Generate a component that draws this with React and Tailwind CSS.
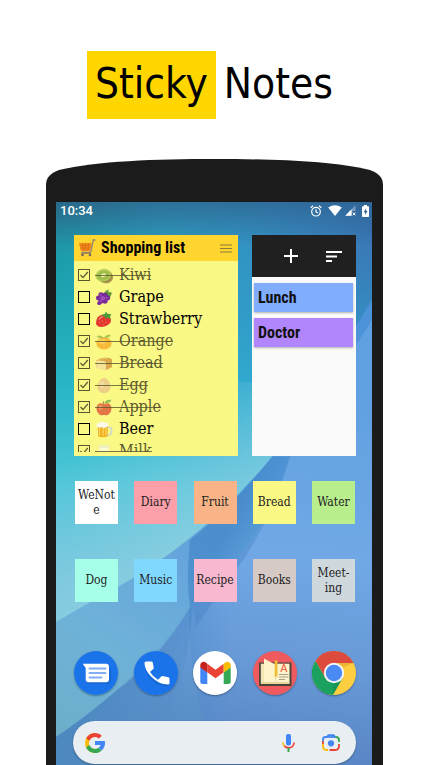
import React from "react";

const SLAB = "font-['Roboto_Slab','DejaVu_Serif_Condensed','DejaVu_Serif',serif]";
const CONDENSED = "font-['Roboto_Condensed','Liberation_Sans_Narrow','Roboto',sans-serif]";

function Wallpaper() {
  return (
    <svg className="absolute inset-0 h-full w-full" viewBox="0 0 316 563" preserveAspectRatio="none" aria-hidden="true">
      <defs>
        <linearGradient id="sky" x1="0" y1="0" x2="0" y2="1">
          <stop offset="0" stopColor="#2a8399" />
          <stop offset="0.1" stopColor="#1b9daa" />
          <stop offset="0.32" stopColor="#27b5c4" />
          <stop offset="0.5" stopColor="#4cc6d8" />
          <stop offset="0.66" stopColor="#66c2dc" />
          <stop offset="0.8" stopColor="#70c0dc" />
        </linearGradient>
        <radialGradient id="skyRight" gradientUnits="userSpaceOnUse" cx="330" cy="30" r="330">
          <stop offset="0" stopColor="#3a74b4" stopOpacity="1" />
          <stop offset="0.35" stopColor="#3a8cc8" stopOpacity="0.8" />
          <stop offset="0.7" stopColor="#3aa4dc" stopOpacity="0.45" />
          <stop offset="1" stopColor="#3aa4dc" stopOpacity="0" />
        </radialGradient>
        <linearGradient id="glow" gradientUnits="userSpaceOnUse" x1="60" y1="230" x2="130" y2="345">
          <stop offset="0" stopColor="#8fcfe2" stopOpacity="0" />
          <stop offset="1" stopColor="#8fcfe2" stopOpacity="0.8" />
        </linearGradient>
        <linearGradient id="shade" x1="0" y1="0" x2="0" y2="1">
          <stop offset="0" stopColor="#274f78" stopOpacity="0.5" />
          <stop offset="1" stopColor="#274f78" stopOpacity="0" />
        </linearGradient>
        <linearGradient id="band" gradientUnits="userSpaceOnUse" x1="316" y1="100" x2="0" y2="540">
          <stop offset="0" stopColor="#4c92d8" />
          <stop offset="0.4" stopColor="#5499d8" />
          <stop offset="0.6" stopColor="#66a6dc" />
          <stop offset="0.8" stopColor="#6fb2d8" />
          <stop offset="1" stopColor="#6caec8" />
        </linearGradient>
        <linearGradient id="front" gradientUnits="userSpaceOnUse" x1="270" y1="180" x2="230" y2="563">
          <stop offset="0" stopColor="#5fa0e0" />
          <stop offset="0.45" stopColor="#70a8e5" />
          <stop offset="0.75" stopColor="#6799d6" />
          <stop offset="1" stopColor="#5884c4" />
        </linearGradient>
        <linearGradient id="fold" gradientUnits="userSpaceOnUse" x1="95" y1="440" x2="150" y2="490">
          <stop offset="0" stopColor="#417fbe" stopOpacity="0.5" />
          <stop offset="1" stopColor="#4c8acb" stopOpacity="0" />
        </linearGradient>
        <linearGradient id="crease" gradientUnits="userSpaceOnUse" x1="132" y1="0" x2="175" y2="0">
          <stop offset="0" stopColor="#3f82c4" stopOpacity="0.3" />
          <stop offset="1" stopColor="#3f82c4" stopOpacity="0" />
        </linearGradient>
        <linearGradient id="slope" gradientUnits="userSpaceOnUse" x1="190" y1="285" x2="222" y2="300">
          <stop offset="0" stopColor="#3f82c4" stopOpacity="0.6" />
          <stop offset="1" stopColor="#3f82c4" stopOpacity="0.1" />
        </linearGradient>
        <linearGradient id="foldLow" gradientUnits="userSpaceOnUse" x1="0" y1="380" x2="0" y2="563">
          <stop offset="0" stopColor="#5c9bce" stopOpacity="0" />
          <stop offset="1" stopColor="#4a8fb8" stopOpacity="0.45" />
        </linearGradient>
      </defs>
      <rect width="316" height="563" fill="url(#sky)" />
      <rect width="316" height="430" fill="url(#skyRight)" />
      <path d="M0 180H270L216 255Q150 335 62 385Q34 400 0 420Z" fill="url(#glow)" />
      <path d="M316 98L299 126Q258 204 216 255Q150 335 62 385Q34 400 0 420V563H316Z" fill="url(#band)" />
      <path d="M216 255Q177 304 134 338Q130 380 134 404L177 361Q208 330 234 255Z" fill="url(#slope)" />
      <path d="M316 118Q258 210 234 255Q208 330 177 361L137 401Q118 432 101 451Q80 475 61 488Q30 515 0 535V563H316Z" fill="url(#front)" />
      <path d="M234 255Q208 330 177 361L137 401L140 425L172 378Q212 330 234 255Z" fill="#427fc0" fillOpacity="0.35" />
      <path d="M137 401Q118 432 101 451Q80 475 61 488Q30 515 0 535V563H70Q130 520 137 401Z" fill="url(#fold)" />
      <path d="M133 404Q132 470 152 530L190 530V372L177 361Z" fill="url(#crease)" />
      <path d="M0 535Q30 515 61 488Q101 451 135 404Q132 470 160 563H0Z" fill="url(#foldLow)" />
      <rect width="316" height="44" fill="url(#shade)" />
    </svg>
  );
}

function Cart() {
  return (
    <svg className="h-[18px] w-[18px]" viewBox="0 0 18 18" aria-hidden="true">
      <path d="M1 4h12.6l-1.7 8H3z" fill="#f28a1c" />
      <path d="M1.6 6.5h11.6M2.2 9h10.4M4.5 4.2l.7 7.6M7.4 4.2v7.6M10.5 4.2l-.5 7.6" stroke="#d96b10" strokeWidth=".7" />
      <path d="M17.4 1h-2.1l-2.6 12.3H3.4" fill="none" stroke="#8c8474" strokeWidth="1.3" />
      <path d="M3.2 14.5h9.6" stroke="#b5894a" strokeWidth="1" />
      <circle cx="4.5" cy="16" r="1.3" fill="#6f6a5d" />
      <circle cx="12" cy="16" r="1.3" fill="#6f6a5d" />
    </svg>
  );
}

const FOOD = {
  kiwi: (
    <>
      <ellipse cx="10" cy="10" rx="8.2" ry="7" transform="rotate(28 10 10)" fill="#7b5a2c" />
      <ellipse cx="8.4" cy="8.8" rx="7.8" ry="6.4" transform="rotate(-18 8.4 8.8)" fill="#86b13c" />
      <ellipse cx="8.4" cy="8.8" rx="5.8" ry="4.5" transform="rotate(-18 8.4 8.8)" fill="#6c9c28" />
      <ellipse cx="8.4" cy="8.8" rx="2.8" ry="1.9" transform="rotate(-18 8.4 8.8)" fill="#e4ecb0" />
    </>
  ),
  grape: (
    <>
      <path d="M9 4q3-4 5-3l-1 2 4 1-2 5q-4 0-6-5z" fill="#5f9c35" />
      <g fill="#7a2c9c">
        <circle cx="6" cy="6" r="2.6" /><circle cx="10" cy="6.5" r="2.6" /><circle cx="3.6" cy="9.6" r="2.6" />
        <circle cx="12.6" cy="9.6" r="2.6" /><circle cx="6" cy="13" r="2.6" /><circle cx="10" cy="13" r="2.6" /><circle cx="4.2" cy="15" r="2" />
      </g>
      <g fill="#9a4dbd"><circle cx="7.8" cy="9.8" r="2.3" /><circle cx="5.4" cy="6" r="1.1" /><circle cx="5.6" cy="12.6" r="1.1" /><circle cx="11.8" cy="9.2" r="1.1" /></g>
    </>
  ),
  strawberry: (
    <>
      <path d="M3 6Q8 2 13 5q4 3 2.600 7-3 4.500-9 5Q1.500 17 1 13 1 9 3 6z" fill="#e2382f" />
      <path d="M4 9q2-3 4-3" stroke="#f58a7a" strokeWidth="1.4" fill="none" />
      <path d="M6 4.500l4-1.500 1-2.500 1.500 2.500 4 .5-1.500 2 .5 3-3.500-1.500-1 1.500-1.500-2.500z" fill="#4e9a3a" />
      <g fill="#f7c07a"><circle cx="5" cy="12" r=".5" /><circle cx="8" cy="14" r=".5" /><circle cx="11" cy="12" r=".5" /><circle cx="7.500" cy="10.500" r=".5" /></g>
    </>
  ),
  orange: (
    <>
      <ellipse cx="9" cy="11" rx="7.6" ry="6.6" fill="#f49a14" />
      <ellipse cx="7" cy="9" rx="4" ry="2.600" fill="#fbb944" />
      <path d="M9 5Q5 1 1.500 3.500 4 7 9 5zM9 5q2-4 7-3-2 4-7 3z" fill="#86a83a" />
    </>
  ),
  bread: (
    <>
      <path d="M1 6q5-4 11-3 6 0 5 4v6l-6 3-10-3z" fill="#c9802e" />
      <path d="M1 7q1-2 5-1 5 0 5 2.500V16L1.500 14z" fill="#f4d9a0" />
      <path d="M2 6q5-3 10-2" stroke="#e2a557" strokeWidth="1.2" fill="none" />
    </>
  ),
  egg: (
    <>
      <path d="M9 1c4 0 6.500 6 6.500 10 0 3.500-3 6-6.500 6s-6.500-2.500-6.500-6C2.500 7 5 1 9 1z" fill="#e8b98a" />
      <ellipse cx="7" cy="8" rx="2.400" ry="3.600" fill="#f2cfa8" />
    </>
  ),
  apple: (
    <>
      <path d="M9 6C6 3 1.500 5 1.500 10c0 4 3 7.500 5.500 7.200 1.400-.3 2.600-.3 4 0 2.500.3 5.500-3.200 5.500-7.200C16.500 5 12 3 9 6z" fill="#d63324" />
      <ellipse cx="5.500" cy="9" rx="2" ry="2.600" fill="#ee6a52" />
      <path d="M9 6.500Q9 4 8 2.500" stroke="#6a4426" strokeWidth="1.1" fill="none" />
      <path d="M9.500 4Q11 0 16.500 .8 15 5 9.500 4z" fill="#5da03a" />
    </>
  ),
  beer: (
    <>
      <path d="M12 7h3q1.500 0 1.500 1.500V12q0 2-2 2.500L12 15" fill="none" stroke="#cdd5d3" strokeWidth="1.600" />
      <path d="M2.500 4h10.500l-.5 12.500q-5 1.500-9.200 0z" fill="#f2b01e" />
      <path d="M4.500 7v8M8 7v8.500M11 7v8" stroke="#fbd96a" strokeWidth="1.200" />
      <path d="M1.500 5q0-3 3-2.800Q6.500 0 9 1.500q4-.6 4.500 2.500 0 3-3 2.500L9 8 7 6.500Q2 8 1.500 5z" fill="#fbf8ec" />
    </>
  ),
  milk: (
    <>
      <path d="M3.500 2h11l-1 14.500h-9z" fill="#e4ead4" />
      <path d="M4 5h10l-.8 11H4.900z" fill="#fdfdf6" />
    </>
  ),
};

const ITEMS = [
  ["Kiwi", "kiwi", true],
  ["Grape", "grape", false],
  ["Strawberry", "strawberry", false],
  ["Orange", "orange", true],
  ["Bread", "bread", true],
  ["Egg", "egg", true],
  ["Apple", "apple", true],
  ["Beer", "beer", false],
  ["Milk", "milk", true],
];

function CheckRow({ name, icon, done }) {
  return (
    <li className="h-[22px]">
      <label className={`flex h-full items-center ${done ? "opacity-65" : ""}`}>
        <span className="grid h-3 w-3 shrink-0">
          <input
            type="checkbox"
            defaultChecked={done}
            className="peer h-3 w-3 appearance-none border border-black [grid-area:1/1]"
          />
          <svg className="pointer-events-none hidden h-3 w-3 [grid-area:1/1] peer-checked:block" viewBox="0 0 12 12" aria-hidden="true">
            <path d="M2.500 6L5 8.700 9.800 3" fill="none" stroke="#000" strokeWidth="1.200" />
          </svg>
        </span>
        <span className="relative ml-[5px] flex items-center gap-[6px]">
          <svg className="h-[17px] w-[18px]" viewBox="0 0 18 18" preserveAspectRatio="none" aria-hidden="true">{FOOD[icon]}</svg>
          <span className="text-[16px] leading-[22px] text-black">{name}</span>
          {done && <span className="absolute inset-x-0 top-[11px] h-px bg-black/80" />}
        </span>
      </label>
    </li>
  );
}

const TILES = [
  ["WeNote", "bg-white"],
  ["Diary", "bg-[#fd9fa8]"],
  ["Fruit", "bg-[#f8b486]"],
  ["Bread", "bg-[#fbf986]"],
  ["Water", "bg-[#b9ee8d]"],
  ["Dog", "bg-[#a6ffe9]"],
  ["Music", "bg-[#80d8ff]"],
  ["Recipe", "bg-[#f8b9d0]"],
  ["Books", "bg-[#d6cac7]"],
  ["Meet-ing", "bg-[#cfd8dd]"],
];

function MessagesIcon() {
  return (
    <svg viewBox="0 0 44 44" className="h-full w-full" aria-hidden="true">
      <circle cx="22" cy="22" r="22" fill="#1a73e8" />
      <path d="M12 28q0 5 4 5h17q4 0 4-5V18l-2-3v13z" fill="#155fc6" opacity=".6" />
      <path d="M8.700 12.700H32a3 3 0 0 1 3 3v12.600a3 3 0 0 1-3 3H14.700a3 3 0 0 1-3-3V17z" fill="#fff" />
      <path d="M15.500 17.500h16M15.500 22h16M15.500 26.500h12" stroke="#80aef7" strokeWidth="2" strokeLinecap="round" />
    </svg>
  );
}

function PhoneIcon() {
  return (
    <svg viewBox="0 0 44 44" className="h-full w-full" aria-hidden="true">
      <circle cx="22" cy="22" r="22" fill="#1a73e8" />
      <path d="M11 17q2 8 7 13 6 5 15 5.500l3-2.500-10-2z" fill="#155fc6" opacity=".5" />
      <path d="M12 10.500h5.300a1.500 1.500 0 0 1 1.500 1.200l.9 5a1.500 1.500 0 0 1-.5 1.400L16 21q3.200 5 8 7.700l3.300-3.200a1.500 1.500 0 0 1 1.400-.4l5.500 1.100a1.500 1.500 0 0 1 1.300 1.500V32a1.500 1.500 0 0 1-1.500 1.500Q25 33.500 17 25.500 10.500 18.500 10.500 12a1.500 1.500 0 0 1 1.500-1.500z" fill="#fff" />
    </svg>
  );
}

function GmailIcon() {
  return (
    <svg viewBox="0 0 44 44" className="h-full w-full" aria-hidden="true">
      <circle cx="22" cy="22" r="22" fill="#fff" />
      <path d="M7.300 16l7 5.200V33H9.400a2.100 2.100 0 0 1-2.100-2.100z" fill="#4285f4" />
      <path d="M37.700 16l-7 5.200V33h4.900a2.100 2.100 0 0 0 2.100-2.100z" fill="#34a853" />
      <path d="M14.300 12.700L22.500 18.800l8.200-6.100v8.500l-8.200 6.100-8.200-6.100z" fill="#ea4335" />
      <path d="M7.300 14v2.400l7 5.200v-8.900l-1.600-1.200C10.500 9.800 7.300 11.400 7.300 14z" fill="#c5221f" />
      <path d="M37.700 14v2.400l-7 5.200v-8.900l1.600-1.200c2.200-1.700 5.400-.1 5.400 2.500z" fill="#fbbc04" />
    </svg>
  );
}

function BookIcon() {
  return (
    <svg viewBox="0 0 44 44" className="h-full w-full" aria-hidden="true">
      <circle cx="22" cy="22" r="22" fill="#ee5a5e" />
      <path d="M6 11.500h32.500V35H6z" fill="#4b4538" />
      <path d="M7.800 12.700h14.700v19.500H7.800z" fill="#f4e6b4" />
      <path d="M22.500 12.700h14v19.500h-14z" fill="#fdf3cd" />
      <path d="M11 7.500l11.500 6.200v19L11 31z" fill="#fff4c8" />
      <path d="M7.800 31h28.700v2H7.800z" fill="#e5d59c" />
      <path d="M21.700 9.500h2.800v17l-1.400-1.400-1.400 1.400z" fill="#f0bd35" />
      <path d="M27.800 21l3-8 3 8M28.800 18.500h4" fill="none" stroke="#ef6b4a" strokeWidth="1.200" />
      <path d="M26 23.500h9.500M26 26h9.500M26 28.500h6" stroke="#a9a08a" strokeWidth="1" />
    </svg>
  );
}

function ChromeIcon() {
  return (
    <svg viewBox="0 0 44 44" className="h-full w-full" aria-hidden="true">
      <circle cx="22" cy="22" r="22" fill="#ffcd40" />
      <path d="M22 22V12h19.600A22 22 0 0 0 3.500 10L13.300 27z" fill="#dd4b3e" />
      <path d="M3.500 10A22 22 0 0 0 20.900 44L30.700 27 22 22l-8.700 5z" fill="#1aa15f" />
      <path d="M41.600 12H22l10 4z" fill="#c98a1e" opacity=".35" />
      <path d="M20.900 44l9.800-17L22 31z" fill="#0c7f45" opacity=".35" />
      <circle cx="22" cy="22" r="10.200" fill="#f4f4f4" />
      <circle cx="22" cy="22" r="8.200" fill="#4a8af4" />
    </svg>
  );
}

const APPS = [
  ["Messages", MessagesIcon],
  ["Phone", PhoneIcon],
  ["Gmail", GmailIcon],
  ["Book reader", BookIcon],
  ["Chrome", ChromeIcon],
];

function StatusBar() {
  return (
    <div className="flex h-[17px] items-center justify-between pl-1 pr-[3px] text-white">
      <span className="font-['Roboto',sans-serif] text-[13px] font-medium leading-4">10:34</span>
      <div className="flex items-center">
        <svg className="mr-[6px] h-3 w-3" viewBox="0 0 12 12" fill="none" stroke="#fff" aria-hidden="true">
          <circle cx="6" cy="6.700" r="4.300" strokeWidth="1.200" />
          <path d="M6 4.200v2.700l1.800 1.200M.7 2.700L3 .8M11.300 2.700L9 .8" strokeWidth="1.200" />
        </svg>
        <svg className="mr-[3px] h-[11px] w-[14px]" viewBox="0 0 14 11" fill="#fff" aria-hidden="true">
          <path d="M7 11L.2 2.600Q7-2 13.800 2.600z" />
        </svg>
        <svg className="mr-[6px] h-[11px] w-[11px]" viewBox="0 0 11 11" fill="#fff" aria-hidden="true">
          <path d="M10.500 .3V6H7v4.700H.3z" opacity=".35" />
          <path d="M6.500 4.300v6.400H.3z" />
          <path d="M7.800 7.500l2.600 2.800M10.400 7.500l-2.600 2.800" stroke="#fff" strokeWidth="1" />
        </svg>
        <svg className="h-3 w-[7px]" viewBox="0 0 7 12" aria-hidden="true">
          <path d="M2 0h3v1.300h1.300q.7 0 .7.700v9.300q0 .7-.7.700H.7Q0 12 0 11.300V2q0-.7.700-.7H2z" fill="#fff" />
          <path d="M4.200 3.300L1.600 7.200h1.500v2.700l2.500-3.900H4.200z" fill="#2f6597" />
        </svg>
      </div>
    </div>
  );
}

function ShoppingWidget() {
  return (
    <section className="flex h-[221px] flex-[164] flex-col overflow-hidden bg-[#fbf985] pb-1">
      <header className="flex h-[26px] shrink-0 items-center bg-[#ffd52f] pl-1 pr-[6px]">
        <Cart />
        <h2 className={`ml-[5px] flex-1 whitespace-nowrap text-[16px] font-bold leading-[26px] text-black ${CONDENSED}`}>Shopping list</h2>
        <button type="button" aria-label="Note menu" className="h-[9px] w-3">
          <svg className="h-[9px] w-3" viewBox="0 0 12 9" aria-hidden="true">
            <path d="M0 1h12M0 4.500h12M0 8h12" stroke="#8d7a3a" strokeWidth="1.200" />
          </svg>
        </button>
      </header>
      <ul className={`min-h-0 flex-1 overflow-hidden pl-1 pt-[3px] ${SLAB}`}>
        {ITEMS.map(([name, icon, done]) => (
          <CheckRow key={name} name={name} icon={icon} done={done} />
        ))}
      </ul>
    </section>
  );
}

function NotesWidget() {
  return (
    <section className="flex h-[221px] flex-[104] flex-col bg-[#fafafa]">
      <header className="flex h-[42px] shrink-0 items-center justify-end gap-7 bg-[#202020] pr-[14px]">
        <button type="button" aria-label="Add note">
          <svg className="h-[14px] w-[14px]" viewBox="0 0 14 14" aria-hidden="true">
            <path d="M7 0v14M0 7h14" stroke="#fff" strokeWidth="2" />
          </svg>
        </button>
        <button type="button" aria-label="Sort notes">
          <svg className="h-[11px] w-4" viewBox="0 0 16 11" aria-hidden="true">
            <path d="M0 1h16M0 5.500h11M0 10h6" stroke="#fff" strokeWidth="2" />
          </svg>
        </button>
      </header>
      <ul className={`flex flex-col gap-[6px] pl-[2px] pr-[3px] pt-[6px] text-[16px] font-bold leading-[29px] text-[#111] ${CONDENSED}`}>
        <li className="bg-[#80adfe] pl-1 shadow-[0_1px_2px_rgba(0,0,0,0.3)]">Lunch</li>
        <li className="bg-[#b186fd] pl-1 shadow-[0_1px_2px_rgba(0,0,0,0.3)]">Doctor</li>
      </ul>
    </section>
  );
}

function SearchBar() {
  return (
    <form className="flex h-[43px] items-center rounded-full bg-[#e9eef3] pl-3 pr-4 shadow-[0_1px_2px_rgba(0,0,0,0.3)]">
      <svg className="h-5 w-5 shrink-0" viewBox="4 4 40 40" aria-hidden="true">
        <path fill="#fbbc05" d="M24 4C13 4 4 13 4 24s9 20 20 20l3-8.400C18 37.500 12 31 12 24s5.400-12 12-12z" />
        <path fill="#ea4335" d="M6.300 14.700l6.600 4.800C14.700 15.100 19 12 24 12c3.100 0 5.800 1.200 7.900 3l5.700-5.700C34 6.100 29.300 4 24 4 16.300 4 9.700 8.300 6.300 14.700z" />
        <path fill="#34a853" d="M24 44c5.200 0 9.900-2 13.400-5.200l-6.200-5.200C29.200 35.100 26.700 36 24 36c-5.200 0-9.600-3.300-11.300-7.900l-6.500 5C9.500 39.600 16.200 44 24 44z" />
        <path fill="#4285f4" d="M43.600 20.100H24v8h11.300c-.8 2.200-2.200 4.200-4.100 5.600l6.200 5.200C37 39.200 44 34 44 24c0-1.300-.1-2.700-.4-3.900z" />
      </svg>
      <input type="text" aria-label="Search the web" className="mx-2 min-w-0 flex-1 bg-transparent outline-none" />
      <button type="button" aria-label="Voice search" className="mr-[27px]">
        <svg className="h-[18px] w-[13px]" viewBox="0 0 13 18" fill="none" aria-hidden="true">
          <rect x="4" y="0" width="5" height="11.500" rx="2" fill="#4285f4" />
          <path d="M.9 8.500q.3 2.500 1.800 3.900" stroke="#fbbc05" strokeWidth="1.700" />
          <path d="M2.400 12.200q1.700 1.700 4.100 1.700 5 0 5.600-5.400" stroke="#ea4335" strokeWidth="1.700" />
          <path d="M6.500 14v4" stroke="#34a853" strokeWidth="2" />
        </svg>
      </button>
      <button type="button" aria-label="Search by image">
        <svg className="h-[17px] w-[18px]" viewBox="0 0 18 17" fill="none" strokeWidth="1.800" aria-hidden="true">
          <path d="M1 7.500V5.500Q1 3 3.500 3H5M5 3L6.300 1.200h5.400L13 3" stroke="#4285f4" />
          <path d="M5 3h9" stroke="#4285f4" />
          <path d="M13.500 3Q17 3 17 6v2" stroke="#34a853" />
          <path d="M1 7v3" stroke="#ea4335" />
          <path d="M1 10v2.500Q1 16 4.500 16H6" stroke="#fbbc05" />
          <path d="M17 10v2q0 4-4 4H7.500" stroke="#ea4335" />
          <circle cx="9" cy="9.300" r="3.100" fill="#4285f4" />
        </svg>
      </button>
    </form>
  );
}

export default function App() {
  return (
    <main className="flex h-screen flex-col overflow-hidden bg-white pt-[51px]">
      <h1 className="flex h-[68px] shrink-0 items-stretch justify-center gap-2 pr-[10px] font-['DejaVu_Sans_Condensed','DejaVu_Sans',sans-serif] text-[42px] leading-[66px] text-black">
        <span className="bg-[#ffd600] px-2">Sticky</span>
        <span>Notes</span>
      </h1>

      <div className="ml-[46px] mr-[47px] mt-10 flex flex-1 flex-col">
        <svg className="h-[43px] w-full shrink-0" viewBox="0 0 337 43" preserveAspectRatio="none" aria-hidden="true">
          <path d="M0 43V26C0 18 5 14 13 11C50 2 110 0 168.500 0C227 0 287 2 324 11C332 14 337 18 337 26V43Z" fill="#1b1b1b" />
        </svg>
        <div className="flex flex-1 flex-col bg-[#1b1b1b] pl-[10px] pr-[11px]">
          <div className="relative flex-1 overflow-hidden">
            <Wallpaper />
            <div className="relative">
              <StatusBar />
              <div className="mt-4 flex gap-[14px] pl-[18px] pr-4">
                <ShoppingWidget />
                <NotesWidget />
              </div>
              <ul className={`mt-[25px] grid grid-cols-[repeat(5,43px)] justify-between gap-y-[35px] pl-[19px] pr-[17px] ${SLAB}`}>
                {TILES.map(([name, color]) => (
                  <li key={name}>
                    <button
                      type="button"
                      className={`flex h-[43px] w-[43px] items-center justify-center text-center text-[12px] leading-[15px] text-[#222] ${color}`}
                    >
                      <span className="w-[39px] [overflow-wrap:anywhere]">{name}</span>
                    </button>
                  </li>
                ))}
              </ul>
              <nav className="mt-[49px] flex justify-between pl-[18px] pr-4">
                {APPS.map(([name, Icon]) => (
                  <button key={name} type="button" aria-label={name} className="h-11 w-11 rounded-full shadow-[0_1px_2px_rgba(0,0,0,0.35)]">
                    <Icon />
                  </button>
                ))}
              </nav>
              <div className="mt-[26px] pl-[17px] pr-4">
                <SearchBar />
              </div>
            </div>
          </div>
        </div>
      </div>
    </main>
  );
}
